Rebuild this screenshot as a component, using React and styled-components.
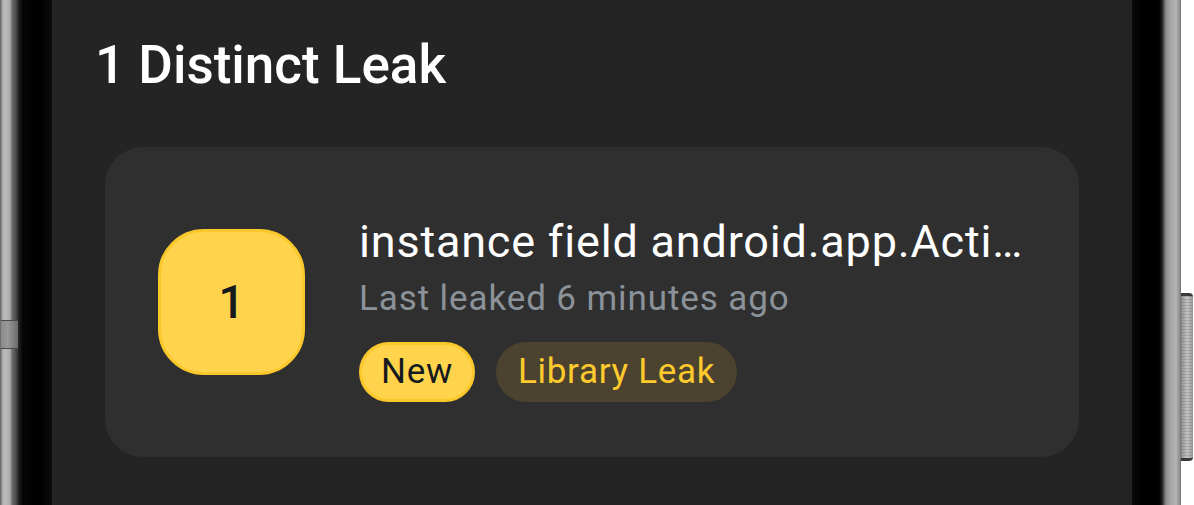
import React from "react";
import styled, { createGlobalStyle } from "styled-components";

const GlobalStyle = createGlobalStyle`
  html, body {
    margin: 0;
    padding: 0;
    background: #ffffff;
  }
  body {
    font-family: Roboto, "Noto Sans", sans-serif;
    overflow: hidden;
  }
`;

const Stage = styled.div`
  width: 1194px;
  height: 505px;
  display: flex;
  background: #ffffff;
`;

const LeftRim = styled.div`
  position: relative;
  width: 52px;
  flex-shrink: 0;
  background: linear-gradient(
    to right,
    #5e5e5e 0px,
    #9c9c9c 2px,
    #bdbdbd 4px,
    #adadad 10px,
    #6e6e6e 12px,
    #4a4a4a 16px,
    #1e1e1e 19px,
    #050505 23px,
    #000000 40px,
    #0b0b0b 52px
  );
`;

const RimSeam = styled.div`
  position: absolute;
  left: 1px;
  top: 320px;
  width: 17px;
  height: 27px;
  background: linear-gradient(to right, #8a8a8a, #999 40%, #6a6a6a);
  border-top: 1px solid #4a4a4a;
  border-bottom: 1px solid #4a4a4a;
`;

const Screen = styled.main`
  width: 1080px;
  flex-shrink: 0;
  background: #242424;
  display: flex;
  flex-direction: column;
  padding: 34px 53px 0;
  box-sizing: border-box;
`;

const RightRim = styled.div`
  width: 49px;
  flex-shrink: 0;
  background: linear-gradient(
    to right,
    #0a0a0a 0px,
    #000000 10px,
    #000000 27px,
    #1c1c1c 30px,
    #5a5a5a 32px,
    #8c8c8c 34px,
    #a3a3a3 38px,
    #b4b4b4 44px,
    #8a8a8a 48px,
    #6a6a6a 49px
  );
`;

const Edge = styled.div`
  position: relative;
  width: 13px;
  flex-shrink: 0;
  background: #ffffff;
`;

const SideButton = styled.div`
  position: absolute;
  left: 0;
  top: 293px;
  width: 12px;
  height: 168px;
  border-radius: 0 4px 4px 0;
  background: repeating-linear-gradient(
      to bottom,
      rgba(0, 0, 0, 0.12) 0px,
      rgba(0, 0, 0, 0.12) 1px,
      transparent 1px,
      transparent 3px
    ),
    linear-gradient(to right, #8c8c8c, #c4c4c4 50%, #9a9a9a);
  border-top: 3px solid #3a3a3a;
  border-bottom: 3px solid #3a3a3a;
  box-sizing: border-box;
`;

const Heading = styled.h1`
  margin: 0 0 0 -10px;
  font-family: Roboto, sans-serif;
  font-weight: 500;
  font-size: 53px;
  color: #ffffff;
`;

const Card = styled.section`
  margin-top: 51px;
  height: 310px;
  border-radius: 38px;
  background: #2f2f2f;
  display: flex;
  align-items: center;
  padding: 0 53px;
  gap: 54px;
  box-sizing: border-box;
`;

const CountBadge = styled.div`
  width: 147px;
  height: 146px;
  flex-shrink: 0;
  border-radius: 46px;
  border: 3px solid #fbc82c;
  background: #ffd44c;
  box-sizing: border-box;
  display: flex;
  align-items: center;
  justify-content: center;
  font-size: 46px;
  font-weight: 500;
  color: #151a1e;
`;

const Info = styled.div`
  flex: 1;
  min-width: 0;
  display: flex;
  flex-direction: column;
  padding-top: 12px;
`;

const Title = styled.div`
  font-size: 45px;
  letter-spacing: 0.8px;
  color: #ffffff;
  white-space: nowrap;
  overflow: hidden;
  text-overflow: ellipsis;
`;

const Subtitle = styled.div`
  margin-top: 10px;
  font-size: 35px;
  letter-spacing: 0.9px;
  color: #8b9299;
`;

const Tags = styled.div`
  display: flex;
  gap: 21px;
  margin-top: 23px;
`;

const Tag = styled.span`
  height: 60px;
  display: inline-flex;
  align-items: center;
  padding: 0 19px;
  border-radius: 30px;
  box-sizing: border-box;
  font-size: 35px;
  letter-spacing: 0.7px;
  border: 3px solid ${(p) => (p.$solid ? "#fbc82c" : "transparent")};
  background: ${(p) => (p.$solid ? "#ffd44c" : "#4b4330")};
  color: ${(p) => (p.$solid ? "#151a1e" : "#ffca2c")};
`;

export default function App() {
  return (
    <>
      <GlobalStyle />
      <Stage>
        <LeftRim>
          <RimSeam />
        </LeftRim>
        <Screen>
          <Heading>1 Distinct Leak</Heading>
          <Card>
            <CountBadge>1</CountBadge>
            <Info>
              <Title>instance field android.app.Activity$1.this$0 leaks MainActivity</Title>
              <Subtitle>Last leaked 6 minutes ago</Subtitle>
              <Tags>
                <Tag $solid>New</Tag>
                <Tag>Library Leak</Tag>
              </Tags>
            </Info>
          </Card>
        </Screen>
        <RightRim />
        <Edge>
          <SideButton />
        </Edge>
      </Stage>
    </>
  );
}
